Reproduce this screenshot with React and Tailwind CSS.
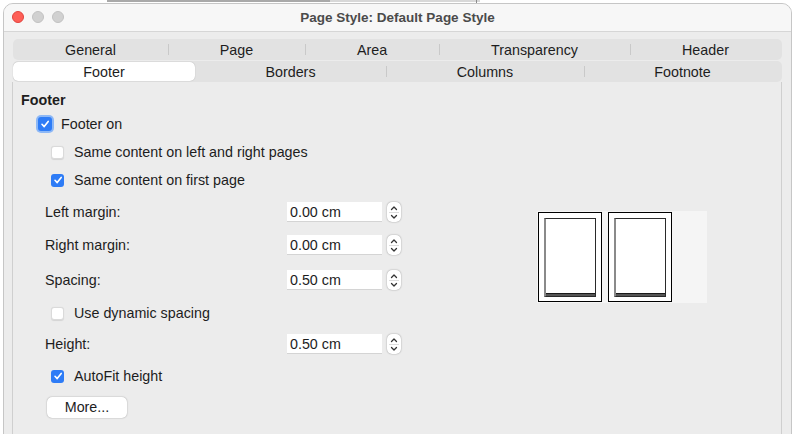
import React from 'react';

const FONT = { fontFamily: '"Liberation Sans", Arial, sans-serif' };

const row1 = [
  { label: 'General', w: 155 },
  { label: 'Page', w: 137 },
  { label: 'Area', w: 134 },
  { label: 'Transparency', w: 191 },
  { label: 'Header', w: 151 },
];

const row2 = [
  { label: 'Footer', w: 182, active: true },
  { label: 'Borders', w: 191 },
  { label: 'Columns', w: 198 },
  { label: 'Footnote', w: 197 },
];

const TabRow = ({ tabs }) => (
  <div className="flex h-[21px] rounded-[5px] bg-[#e2e2e2] items-stretch">
    {tabs.map((t, i) => {
      const prevActive = i > 0 && tabs[i - 1].active;
      return (
        <div
          key={t.label}
          style={{ width: t.w }}
          className="relative flex items-center justify-center pt-px"
        >
          {i > 0 && !t.active && !prevActive && (
            <span className="absolute left-0 top-[5px] h-[11px] w-px bg-[#c9c9c9]" />
          )}
          {t.active ? (
            <div className="absolute inset-x-0 inset-y-[1px] rounded-[5px] bg-white shadow-[0_0_1px_rgba(0,0,0,0.3)] flex items-center justify-center pt-px">
              {t.label}
            </div>
          ) : (
            t.label
          )}
        </div>
      );
    })}
  </div>
);

const Check = ({ checked, focus }) => {
  if (checked) {
    return (
      <span
        className={`flex items-center justify-center rounded-[3px] bg-[#2e7cf6] ${
          focus ? 'w-[14px] h-[14px] ring-[2px] ring-[#8db8f6]' : 'w-[13px] h-[13px]'
        }`}
      >
        <svg width="10" height="10" viewBox="0 0 10 10">
          <path d="M2 5.3 L4.2 7.6 L8.2 2.4" fill="none" stroke="white" strokeWidth="1.6" strokeLinecap="round" strokeLinejoin="round" />
        </svg>
      </span>
    );
  }
  return (
    <span className="block w-[13px] h-[13px] rounded-[3px] bg-white border border-[#dadada] shadow-[0_0.5px_1px_rgba(0,0,0,0.1)]" />
  );
};

const CheckRow = ({ checked, focus, label, className }) => (
  <div className={`flex items-center ${className}`}>
    <Check checked={checked} focus={focus} />
    <span className={focus ? 'ml-[9px]' : 'ml-[10px]'}>{label}</span>
  </div>
);

const Spin = () => (
  <div className="ml-[5px] w-[14px] h-[20px] rounded-[5px] bg-white shadow-[0_0_1.5px_rgba(0,0,0,0.45)] flex flex-col items-center justify-center">
    <svg width="8" height="6" viewBox="0 0 8 6">
      <path d="M1.5 4.5 L4 2 L6.5 4.5" fill="none" stroke="#333" strokeWidth="1.3" strokeLinecap="round" strokeLinejoin="round" />
    </svg>
    <span className="w-[10px] h-px bg-[#dcdcdc] my-[1px]" />
    <svg width="8" height="6" viewBox="0 0 8 6">
      <path d="M1.5 1.5 L4 4 L6.5 1.5" fill="none" stroke="#333" strokeWidth="1.3" strokeLinecap="round" strokeLinejoin="round" />
    </svg>
  </div>
);

const Field = ({ label, value, className }) => (
  <div className={`flex items-center ${className}`}>
    <span className="w-[266px] pl-[24px]">{label}</span>
    <div className="w-[95px] h-[20px] bg-white border-b border-[#d4d4d4] flex items-center pl-[3px]">
      {value}
    </div>
    <Spin />
  </div>
);

const PagePreview = () => (
  <div className="w-[64px] h-[90px] border border-black bg-white p-[5px] pb-[4px]">
    <div className="h-full border border-[#2a2a2a] border-l-[#8a8a8a] border-l-2 flex flex-col bg-white">
      <div className="flex-1" />
      <div className="h-[3px] bg-[#555] border-t border-[#1a1a1a]" />
    </div>
  </div>
);

export default function App() {
  return (
    <div style={FONT} className="relative w-[794px] h-[434px] bg-white overflow-hidden text-[14.3px] leading-[20px] text-[#1d1d1d]">
      {/* stuff behind the window */}
      <div className="absolute top-0 left-[107px] w-[223px] h-[2px] bg-[#a9a9a9]" />
      <div className="absolute top-0 left-[330px] w-[150px] h-[2px] bg-[#d8d8d8]" />
      <div className="absolute top-0 left-[476px] w-px h-[4px] bg-[#8a8a8a]" />

      <div className="absolute left-[3px] top-[3px] w-[789px] h-[440px] rounded-t-[10px] border border-[#c6c6c6] bg-[#ececec] overflow-hidden">
        {/* title bar */}
        <div className="relative h-[28px] bg-[#f7f7f7] border-b border-[#d6d6d6] flex items-center justify-center">
          <div className="absolute left-[8px] top-[7px] flex gap-[8px]">
            <span className="w-[12px] h-[12px] rounded-full bg-[#fe5f57] border border-[#e0443e]" />
            <span className="w-[12px] h-[12px] rounded-full bg-[#d1d1d1] border border-[#c2c2c2]" />
            <span className="w-[12px] h-[12px] rounded-full bg-[#d1d1d1] border border-[#c2c2c2]" />
          </div>
          <span className="font-bold text-[13.5px] text-[#4b4b4b] pt-[1px]">Page Style: Default Page Style</span>
        </div>

        <div className="pl-[8px] pr-[9px] pt-[7px]">
          <div className="ml-[1px] flex flex-col gap-[1px]">
            <TabRow tabs={row1} />
            <TabRow tabs={row2} />
          </div>

          {/* tab page */}
          <div className="border-l border-r border-[#cfcfcf] h-[400px] pl-[8px] pt-[8px]">
            <div className="h-[20px] flex items-center font-bold">Footer</div>
            <div className="flex">
              <div className="w-[500px]">
                <CheckRow checked focus label="Footer on" className="h-[28px] ml-[17px]" />
                <CheckRow label="Same content on left and right pages" className="h-[28px] ml-[30px]" />
                <CheckRow checked label="Same content on first page" className="h-[28px] ml-[30px]" />
                <Field label="Left margin:" value="0.00 cm" className="h-[36px]" />
                <Field label="Right margin:" value="0.00 cm" className="h-[30px]" />
                <Field label="Spacing:" value="0.50 cm" className="h-[40px]" />
                <CheckRow label="Use dynamic spacing" className="h-[26px] ml-[30px]" />
                <Field label="Height:" value="0.50 cm" className="h-[36px]" />
                <CheckRow checked label="AutoFit height" className="h-[28px] ml-[30px]" />
                <div className="h-[34px] flex items-center">
                  <button className="ml-[26px] w-[80px] h-[21px] rounded-[5px] bg-white shadow-[0_0_1.5px_rgba(0,0,0,0.4)] flex items-center justify-center">
                    More...
                  </button>
                </div>
              </div>
              <div className="ml-[16px] mt-[101px] w-[170px] h-[92px] bg-[#f5f5f5] flex gap-[6px] pl-[1px] pt-[1px]">
                <PagePreview />
                <PagePreview />
              </div>
            </div>
          </div>
        </div>
      </div>
    </div>
  );
}
